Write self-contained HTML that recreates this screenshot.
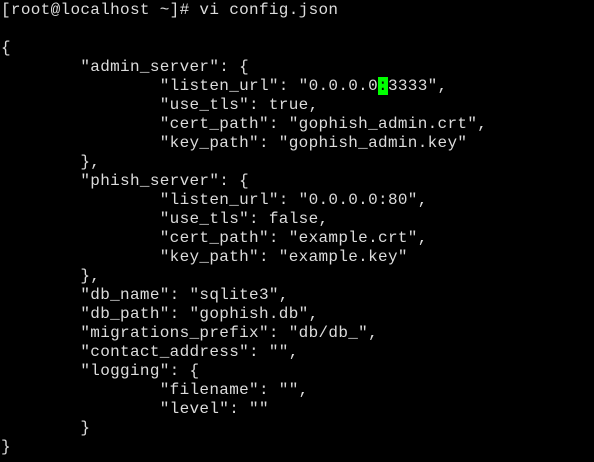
<!DOCTYPE html>
<html><head><style>
html,body{margin:0;padding:0;background:#000;width:594px;height:462px;overflow:hidden}
pre{margin:0;position:absolute;left:1px;top:1px;font-family:"Liberation Mono",monospace;font-size:16px;letter-spacing:0.32px;line-height:19px;color:#dcdcdc}
.c{background:#00ff00;color:#000}
</style></head><body>
<pre>[root@localhost ~]# vi config.json

{
        "admin_server": {
                "listen_url": "0.0.0.0<span class="c">:</span>3333",
                "use_tls": true,
                "cert_path": "gophish_admin.crt",
                "key_path": "gophish_admin.key"
        },
        "phish_server": {
                "listen_url": "0.0.0.0:80",
                "use_tls": false,
                "cert_path": "example.crt",
                "key_path": "example.key"
        },
        "db_name": "sqlite3",
        "db_path": "gophish.db",
        "migrations_prefix": "db/db_",
        "contact_address": "",
        "logging": {
                "filename": "",
                "level": ""
        }
}</pre>
</body></html>
